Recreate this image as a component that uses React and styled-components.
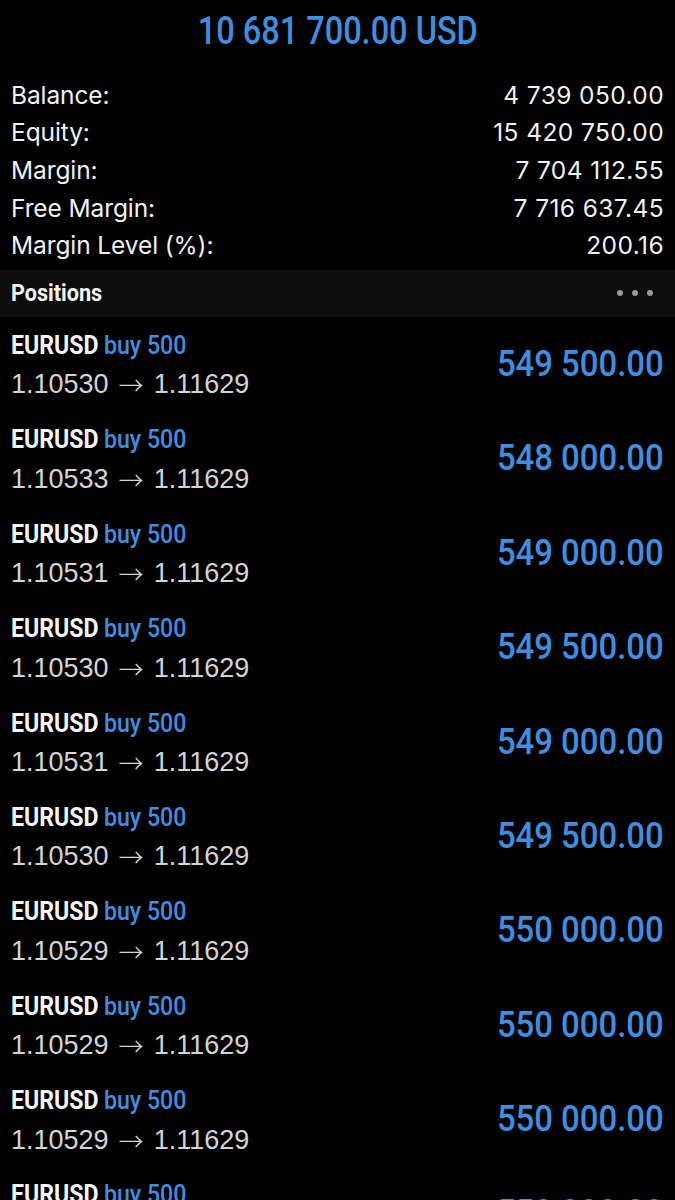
import React from "react";
import styled, { createGlobalStyle } from "styled-components";

const Global = createGlobalStyle`
  html, body { margin: 0; padding: 0; background: #000; }
  body { font-family: Inter, "Liberation Sans", sans-serif; -webkit-font-smoothing: antialiased; }
`;

const condensed = `Roboto, "Liberation Sans", sans-serif`;

const Screen = styled.div`
  width: 675px;
  height: 1200px;
  background: #000;
  overflow: hidden;
`;

const Header = styled.div`
  height: 76px;
  display: flex;
  justify-content: center;
  padding-top: 8px;
  box-sizing: border-box;
`;

const Total = styled.div`
  font-family: ${condensed};
  font-weight: 500;
  font-size: 38px;
  line-height: 46px;
  color: #3f8fe0;
  transform: scaleX(0.855);
  transform-origin: center;
  white-space: nowrap;
`;

const Summary = styled.div`
  padding: 0 11px;
`;

const SummaryRow = styled.div`
  display: flex;
  justify-content: space-between;
  align-items: center;
  height: 37.6px;
  font-family: Inter, "Liberation Sans", sans-serif;
  font-size: 24.5px;
  color: #f2f2f2;
  letter-spacing: -0.1px;
`;

const SummaryValue = styled.span`
  letter-spacing: 0.4px;
`;

const SectionBar = styled.div`
  margin-top: 6px;
  height: 47px;
  background: #0e0e0e;
  display: flex;
  align-items: center;
  justify-content: space-between;
  padding: 0 22px 0 11px;
`;

const SectionTitle = styled.div`
  font-family: ${condensed};
  font-weight: 700;
  font-size: 24px;
  color: #f4f4f4;
  transform: scaleX(0.9);
  transform-origin: left center;
`;

const Dots = styled.div`
  display: flex;
  gap: 9px;
`;

const Dot = styled.span`
  width: 6px;
  height: 6px;
  border-radius: 50%;
  background: #9a9a9a;
`;

const Position = styled.div`
  height: 94.4px;
  box-sizing: border-box;
  padding: 11px 11px 0 11px;
  display: flex;
  justify-content: space-between;
  align-items: flex-start;
`;

const Info = styled.div`
  display: flex;
  flex-direction: column;
`;

const Title = styled.div`
  height: 34px;
  display: flex;
  align-items: center;
  gap: 6px;
  font-family: ${condensed};
  font-weight: 700;
  font-size: 26px;
  color: #f6f6f6;
  transform: scaleX(0.89);
  transform-origin: left center;
  white-space: nowrap;
`;

const Side = styled.span`
  color: #3f8fe0;
  font-weight: 500;
`;

const Prices = styled.div`
  height: 46px;
  display: flex;
  align-items: center;
  gap: 10px;
  font-family: "Liberation Sans", Arial, sans-serif;
  font-size: 27px;
  color: #d4d4d4;
  white-space: nowrap;
`;

const Arrow = styled.span`
  font-family: "Noto Sans CJK SC", "DejaVu Sans", sans-serif;
  font-weight: 300;
  font-size: 25px;
  line-height: 1;
  color: #d4d4d4;
`;

const Profit = styled.div`
  height: 72px;
  display: flex;
  align-items: center;
  font-family: ${condensed};
  font-weight: 500;
  font-size: 36px;
  color: #3f8fe0;
  transform: scaleX(0.913);
  transform-origin: right center;
  white-space: nowrap;
`;

const summary = [
  ["Balance:", "4 739 050.00"],
  ["Equity:", "15 420 750.00"],
  ["Margin:", "7 704 112.55"],
  ["Free Margin:", "7 716 637.45"],
  ["Margin Level (%):", "200.16"],
];

const positions = [
  ["1.10530", "549 500.00"],
  ["1.10533", "548 000.00"],
  ["1.10531", "549 000.00"],
  ["1.10530", "549 500.00"],
  ["1.10531", "549 000.00"],
  ["1.10530", "549 500.00"],
  ["1.10529", "550 000.00"],
  ["1.10529", "550 000.00"],
  ["1.10529", "550 000.00"],
  ["1.10529", "550 000.00"],
];

export default function App() {
  return (
    <Screen>
      <Global />
      <Header>
        <Total>10 681 700.00 USD</Total>
      </Header>
      <Summary>
        {summary.map(([k, v]) => (
          <SummaryRow key={k}>
            <span>{k}</span>
            <SummaryValue>{v}</SummaryValue>
          </SummaryRow>
        ))}
      </Summary>
      <SectionBar>
        <SectionTitle>Positions</SectionTitle>
        <Dots>
          <Dot />
          <Dot />
          <Dot />
        </Dots>
      </SectionBar>
      {positions.map(([open, profit], i) => (
        <Position key={i}>
          <Info>
            <Title>
              EURUSD <Side>buy 500</Side>
            </Title>
            <Prices>
              <span>{open}</span>
              <Arrow>→</Arrow>
              <span>1.11629</span>
            </Prices>
          </Info>
          <Profit>{profit}</Profit>
        </Position>
      ))}
    </Screen>
  );
}
